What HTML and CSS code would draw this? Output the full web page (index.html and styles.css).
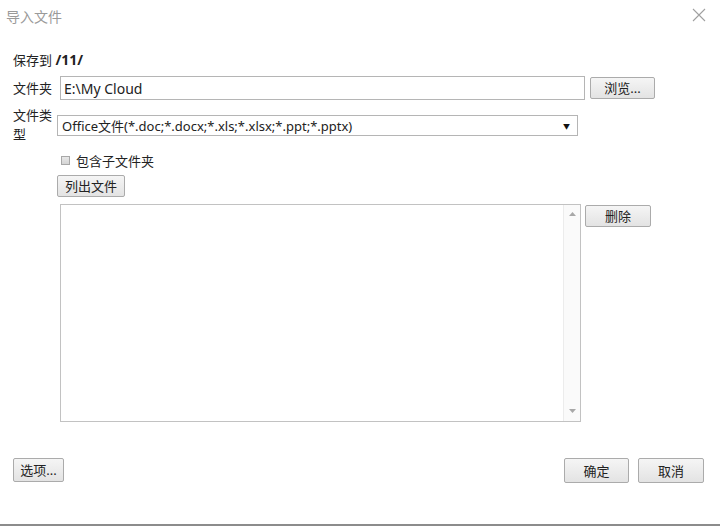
FILE: index.html
```html
<!DOCTYPE html>
<html lang="zh-CN">
<head>
    <meta charset="UTF-8">
    <meta name="viewport" content="width=device-width, initial-scale=1.0">
    <title>导入文件</title>
    <link rel="stylesheet" href="styles.css">
</head>
<body>
    <div class="dialog">
        <div class="title-bar">
            <span class="title">导入文件</span>
            <svg class="close" width="14" height="14" viewBox="0 0 14 14">
                <path d="M1 1 L13 13 M13 1 L1 13" stroke="#a0a0a0" stroke-width="1.1" fill="none"/>
            </svg>
        </div>
        <div class="content">
            <div class="save-row">保存到 <b>/11/</b></div>
            <div class="folder-row">
                <label class="label">文件夹</label>
                <input type="text" class="text-input" value="E:\My Cloud">
                <button class="btn browse-btn">浏览...</button>
            </div>
            <div class="type-row">
                <label class="label type-label">文件类型</label>
                <div class="select">
                    <span>Office文件(*.doc;*.docx;*.xls;*.xlsx;*.ppt;*.pptx)</span>
                    <span class="arrow">&#9660;</span>
                </div>
            </div>
            <div class="check-row">
                <span class="checkbox"></span>
                <span>包含子文件夹</span>
            </div>
            <div class="list-btn-row">
                <button class="btn list-btn">列出文件</button>
            </div>
            <div class="files-row">
                <div class="file-list">
                    <div class="list-body"></div>
                    <div class="scrollbar">
                        <svg width="7" height="4" viewBox="0 0 7 4"><path d="M0 4 L3.5 0 L7 4 Z" fill="#a8a8a8"/></svg>
                        <svg width="7" height="4" viewBox="0 0 7 4"><path d="M0 0 L3.5 4 L7 0 Z" fill="#a8a8a8"/></svg>
                    </div>
                </div>
                <button class="btn delete-btn">删除</button>
            </div>
        </div>
        <div class="footer">
            <button class="btn options-btn">选项...</button>
            <div class="footer-right">
                <button class="btn ok-btn">确定</button>
                <button class="btn cancel-btn">取消</button>
            </div>
        </div>
    </div>
</body>
</html>
```

FILE: styles.css
```css
body {
    margin: 0;
    padding: 0;
    background-color: #fff;
    font-family: "Noto Sans", "Noto Sans CJK SC", sans-serif;
    font-size: 13px;
    color: #222;
}
.dialog {
    width: 720px;
    height: 526px;
    box-sizing: border-box;
    border-bottom: 2px solid #8c8c8c;
    display: flex;
    flex-direction: column;
}
.title-bar {
    height: 32px;
    display: flex;
    align-items: center;
    justify-content: space-between;
    padding: 0 14px 0 6px;
}
.title {
    font-size: 14px;
    color: #9a9a9a;
    margin-top: -1px;
}
.close {
    margin-top: -2px;
}
.content {
    padding: 0 13px;
    flex: 1;
}
.save-row {
    margin-top: 18px;
    height: 20px;
    line-height: 20px;
}
.save-row b {
    font-size: 14px;
}
.folder-row {
    margin-top: 6px;
    display: flex;
    align-items: flex-start;
}
.label {
    width: 47px;
    flex-shrink: 0;
    line-height: 24px;
}
.text-input {
    width: 525px;
    height: 24px;
    box-sizing: border-box;
    margin: 0;
    border: 1px solid #b5b5b5;
    padding: 0 3px;
    font-family: "Noto Sans", "Noto Sans CJK SC", sans-serif;
    font-size: 14px;
    color: #222;
    outline: none;
}
.btn {
    height: 22px;
    box-sizing: border-box;
    margin: 0;
    padding: 0;
    border: 1px solid #ababab;
    border-radius: 2px;
    background: linear-gradient(#f5f5f5, #e3e3e3);
    font-family: "Noto Sans", "Noto Sans CJK SC", sans-serif;
    font-size: 13px;
    color: #222;
    line-height: 20px;
}
.browse-btn {
    width: 65px;
    margin: 1px 0 0 5px;
}
.type-row {
    margin-top: 6px;
    display: flex;
    align-items: flex-start;
}
.type-label {
    width: 40px;
    margin-right: 4px;
    line-height: 19px;
}
.select {
    width: 521px;
    height: 21px;
    box-sizing: border-box;
    margin-top: 9px;
    border: 1px solid #b5b5b5;
    padding: 0 4px;
    display: flex;
    align-items: center;
    justify-content: space-between;
    font-size: 13px;
    white-space: nowrap;
}
.arrow {
    font-size: 7px;
    color: #111;
    margin-right: 3px;
}
.check-row {
    margin-top: 7px;
    margin-left: 48px;
    height: 18px;
    display: flex;
    align-items: center;
}
.checkbox {
    width: 7px;
    height: 7px;
    border: 1px solid #a8a8a8;
    background: linear-gradient(#e8e8e8, #d4d4d4);
    margin-right: 6px;
}
.list-btn-row {
    margin-top: 6px;
    margin-left: 44px;
}
.list-btn {
    width: 68px;
}
.files-row {
    margin-top: 7px;
    margin-left: 47px;
    display: flex;
    align-items: flex-start;
}
.file-list {
    width: 521px;
    height: 218px;
    box-sizing: border-box;
    border: 1px solid #c2c2c2;
    display: flex;
}
.list-body {
    flex: 1;
}
.scrollbar {
    width: 16px;
    border-left: 1px solid #ececec;
    background-color: #fafafa;
    display: flex;
    flex-direction: column;
    justify-content: space-between;
    align-items: center;
    padding: 7px 0 8px;
}
.delete-btn {
    width: 66px;
    margin: 1px 0 0 4px;
}
.footer {
    height: 66px;
    display: flex;
    justify-content: space-between;
    align-items: flex-start;
    padding: 0 16px 0 13px;
}
.options-btn {
    width: 51px;
    height: 24px;
}
.footer-right {
    display: flex;
    gap: 9px;
}
.ok-btn {
    width: 65px;
    height: 25px;
}
.cancel-btn {
    width: 66px;
    height: 25px;
}
```
